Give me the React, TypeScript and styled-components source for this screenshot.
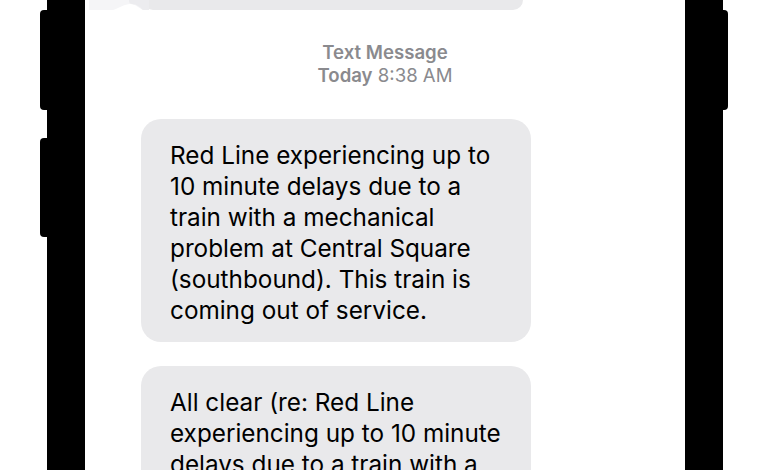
import React from 'react'
import styled, { createGlobalStyle } from 'styled-components'

const GlobalStyle = createGlobalStyle`
  html, body {
    margin: 0;
    padding: 0;
    background: #ffffff;
    overflow: hidden;
  }
  body {
    font-family: Inter, "Liberation Sans", Arial, sans-serif;
    -webkit-font-smoothing: antialiased;
  }
`

const Device = styled.div`
  display: flex;
  width: 770px;
  height: 470px;
  padding-left: 40px;
  box-sizing: border-box;
  overflow: hidden;
`

const ButtonRail = styled.div<{ $width: number }>`
  display: flex;
  flex-direction: column;
  width: ${p => p.$width}px;
  padding-top: 10px;
  gap: 28px;
`

const SideKey = styled.div<{ $side: 'left' | 'right'; $height: number }>`
  flex-shrink: 0;
  height: ${p => p.$height}px;
  background: #000;
  border-radius: ${p => (p.$side === 'left' ? '4px 0 0 4px' : '0 4px 4px 0')};
`

const Bezel = styled.div`
  width: 38px;
  background: #000;
`

const Screen = styled.div`
  width: 600px;
  background: #fff;
  display: flex;
  flex-direction: column;
  overflow: hidden;

  & > * {
    flex-shrink: 0;
  }
`

const PrevBubble = styled.div`
  position: relative;
  width: 380px;
  height: 10px;
  margin-left: 58px;
  background: #e9e9eb;
  border-radius: 0 0 12px 12px;
`

const Tail = styled.svg`
  position: absolute;
  left: -58px;
  top: 0;
`

const Stamp = styled.div`
  margin-top: 31px;
  text-align: center;
  color: #8a8a8e;
  font-size: 18.6px;
  line-height: 22.5px;
  font-weight: 400;
`

const StampStrong = styled.span`
  font-weight: 600;
`

const Bubble = styled.div<{ $gap: number }>`
  width: 390px;
  box-sizing: border-box;
  margin: ${p => p.$gap}px 0 0 56px;
  padding: 21px 14px 16px 29px;
  background: #e9e9eb;
  border-radius: 20px;
  color: #000;
  font-size: 24.3px;
  line-height: 31px;
  white-space: pre-line;
`

const messages = [
  'Red Line experiencing up to\n10 minute delays due to a\ntrain with a mechanical\nproblem at Central Square\n(southbound). This train is\ncoming out of service.',
  'All clear (re: Red Line\nexperiencing up to 10 minute\ndelays due to a train with a\nmechanical problem at\nCentral Square (southbound).',
]

export default function App() {
  return (
    <>
      <GlobalStyle />
      <Device>
        <ButtonRail $width={7}>
          <SideKey $side='left' $height={100} />
          <SideKey $side='left' $height={99} />
        </ButtonRail>
        <Bezel />
        <Screen>
          <PrevBubble>
            <Tail width='64' height='10' viewBox='0 0 64 10'>
              <path d='M4 0 H64 V10 H58 C54 8 50 4 45 4 C40 4 34 8 28 10 L4 10 Z' fill='#f5f5f7' />
              <path d='M44 0 H64 V10 H58 C55 7 51 4 47 4 C45 4 44 3 44 0 Z' fill='#ececef' />
            </Tail>
          </PrevBubble>
          <Stamp>
            <StampStrong>Text Message</StampStrong>
            <br />
            <StampStrong>Today</StampStrong> 8:38 AM
          </Stamp>
          <Bubble $gap={33}>{messages[0]}</Bubble>
          <Bubble $gap={24}>{messages[1]}</Bubble>
        </Screen>
        <Bezel />
        <ButtonRail $width={5}>
          <SideKey $side='right' $height={100} />
        </ButtonRail>
      </Device>
    </>
  )
}
